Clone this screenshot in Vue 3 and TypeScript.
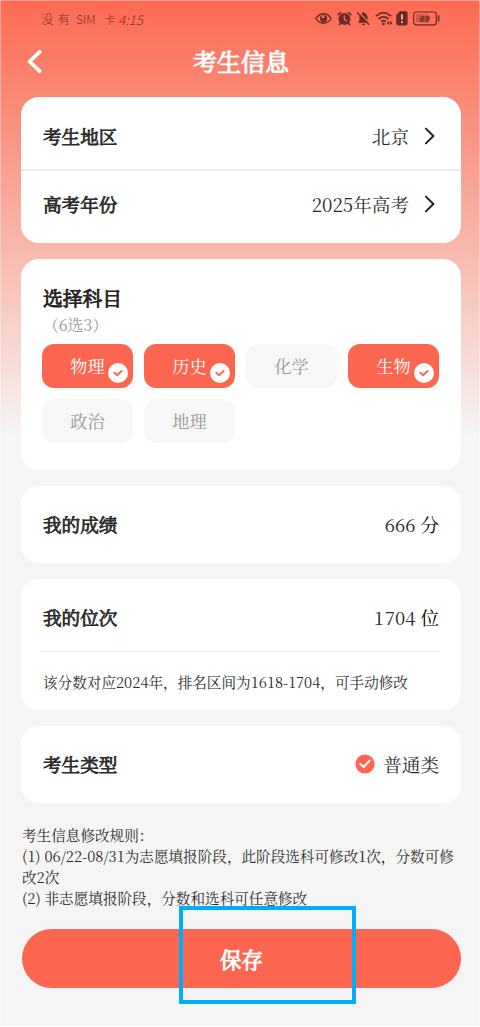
<script setup lang="ts">
import { h, ref } from 'vue'

interface Subject {
  name: string
  picked: boolean
}

const subjects = ref<Subject[]>([
  { name: '物理', picked: true },
  { name: '历史', picked: true },
  { name: '化学', picked: false },
  { name: '生物', picked: true },
  { name: '政治', picked: false },
  { name: '地理', picked: false },
])

const pickers = [
  { label: '考生地区', value: '北京' },
  { label: '高考年份', value: '2025年高考' },
]

const rules = [
  '考生信息修改规则：',
  '(1) 06/22-08/31为志愿填报阶段，此阶段选科可修改1次，分数可修',
  '改2次',
  '(2) 非志愿填报阶段，分数和选科可任意修改',
]

const Figures = (props: { text: string }) =>
  props.text.split(/(1)/).map((part) => (part === '1' ? h('span', { class: 'figure-one' }, part) : part))
Figures.props = ['text']
</script>

<template>
  <div class="page">
    <header class="status">
      <div class="carrier">
        <span class="c1">没有</span><span class="c2">SIM</span><span class="c3">卡</span><span class="c4">4:15</span>
      </div>
      <div class="status-icons">
        <svg class="eye" width="17" height="13" viewBox="0 0 17 13">
          <path d="M.9 6.5C4.8.2 12.2.2 16.1 6.5 12.2 12.8 4.8 12.8.9 6.5Z" fill="none" stroke="currentColor" stroke-width="1.4" />
          <circle cx="8.5" cy="6.6" r="3.6" fill="currentColor" />
          <circle cx="8.1" cy="4.7" r="1.5" fill="#fb705b" />
        </svg>
        <svg class="alarm" width="15" height="15" viewBox="0 0 15 15">
          <circle cx="7.5" cy="8" r="6" fill="currentColor" />
          <path d="M1.2 3.6 3.4 1.6M13.8 3.6l-2.2-2M3.2 12.6l-.8 1.1M11.8 12.6l.8 1.1" stroke="currentColor" stroke-width="1.7" stroke-linecap="round" />
          <path d="M7.3 4.5V8.3L10 10" stroke="#fb705b" stroke-width="1.3" fill="none" />
        </svg>
        <svg class="bell" width="15" height="15" viewBox="0 0 15 15">
          <path d="M7.5 1.2c-.8 0-1.2.5-1.2 1.1C4 3 3.4 5 3.4 7v2.5L1.8 11.8h11.4l-1.6-2.3V7c0-2-.6-4-2.9-4.7 0-.6-.4-1.1-1.2-1.1ZM5.8 12.7h3.4c0 2-3.4 2-3.4 0Z" fill="currentColor" />
          <path d="M2.4 1.1 14.4 13" stroke="#fb705b" stroke-width="1.4" />
          <path d="M1.2 1.6 13.2 13.8" stroke="currentColor" stroke-width="1.4" />
        </svg>
        <svg class="wifi" width="18" height="15" viewBox="0 0 18 15">
          <path d="M1 5.1Q8.5-1.7 16 5.1M3.5 8Q8.5 3.6 13.5 8M6 10.6Q8.5 8.6 11 10.6" fill="none" stroke="currentColor" stroke-width="1.7" />
          <circle cx="8.5" cy="12.9" r="1.4" fill="currentColor" />
          <path d="M14.1 10v4L11.6 12ZM15 10v4l2.5-2Z" fill="currentColor" />
        </svg>
        <svg class="sim" width="12" height="15" viewBox="0 0 12 15">
          <path d="M3.8.3H9.8a1.8 1.8 0 0 1 1.8 1.8V12.6a1.8 1.8 0 0 1-1.8 1.8H2A1.8 1.8 0 0 1 .2 12.6V4Z" fill="currentColor" />
          <path d="M6 3.3V8.6M6 10.2v1.9" stroke="#ffb3a3" stroke-width="1.8" />
        </svg>
        <svg class="battery" width="27" height="15" viewBox="0 0 27 15">
          <rect x=".7" y="1" width="22.6" height="12.8" rx="2.6" fill="none" stroke="currentColor" stroke-width="1.2" />
          <rect x="3" y="3.2" width="12.8" height="8.4" rx="1" fill="currentColor" opacity=".3" />
          <path d="M25.6 4.3V10.5" stroke="currentColor" stroke-width="1.6" />
          <text x="6.6" y="10.6" class="charge">69</text>
        </svg>
      </div>
    </header>

    <nav class="bar">
      <svg class="back" width="16" height="25" viewBox="0 0 16 25">
        <path d="M13.6 2.8 3.6 12.5 13.6 22.2" fill="none" stroke="#fff" stroke-width="3.8" stroke-linecap="round" stroke-linejoin="round" />
      </svg>
      <h1>考生信息</h1>
      <span class="bar-end"></span>
    </nav>

    <main class="content">
      <section class="card pickers">
        <div v-for="p in pickers" :key="p.label" class="row picker">
          <span class="label">{{ p.label }}</span>
          <span class="value">{{ p.value }}</span>
          <svg class="chevron" width="11" height="18" viewBox="0 0 11 18">
            <path d="M1.9 1.6 9.4 9 1.9 16.4" fill="none" stroke="#222" stroke-width="2" stroke-linecap="round" stroke-linejoin="round" />
          </svg>
        </div>
      </section>

      <section class="card subjects">
        <h2>选择科目</h2>
        <p class="hint">（6选3）</p>
        <div class="chips">
          <div v-for="s in subjects" :key="s.name" class="chip" :class="{ picked: s.picked }">
            {{ s.name }}
            <svg v-if="s.picked" class="tick" width="20" height="20" viewBox="0 0 20 20">
              <circle cx="10" cy="10" r="10" fill="#fff" />
              <path d="M6.3 9.7 9.2 12.3 13.6 8" fill="none" stroke="#fc6650" stroke-width="1.9" stroke-linecap="round" stroke-linejoin="round" />
            </svg>
          </div>
        </div>
      </section>

      <section class="card row score">
        <span class="label">我的成绩</span>
        <span class="amount">666</span>
        <span class="unit">分</span>
      </section>

      <section class="card rank">
        <div class="row rank-row">
          <span class="label">我的位次</span>
          <span class="amount"><Figures text="1704" /></span>
          <span class="unit">位</span>
        </div>
        <p class="note"><Figures text="该分数对应2024年，排名区间为1618-1704，可手动修改" /></p>
      </section>

      <section class="card row kind">
        <span class="label">考生类型</span>
        <svg class="kind-tick" width="20" height="20" viewBox="0 0 20 20">
          <circle cx="10" cy="10" r="9.6" fill="#fc6650" />
          <path d="M5.4 10 8.6 13 14.6 6.6" fill="none" stroke="#fff" stroke-width="2" stroke-linecap="round" stroke-linejoin="round" />
        </svg>
        <span class="kind-name">普通类</span>
      </section>

      <div class="rules">
        <p v-for="r in rules" :key="r"><Figures :text="r" /></p>
      </div>

      <div class="save-area">
        <button type="button" class="save">保存</button>
        <div class="highlight"></div>
      </div>
    </main>
  </div>
</template>

<style>
body {
  margin: 0;
}

.figure-one {
  padding: 0 0.04em;
}
</style>

<style scoped>
.page {
  box-sizing: border-box;
  width: 480px;
  height: 1027px;
  overflow: hidden;
  border-top: 1px solid #ff9d8d;
  border-left: 1px solid rgba(255, 255, 255, 0.35);
  border-right: 1px solid rgba(255, 255, 255, 0.35);
  border-bottom: 1px solid #fff;
  background: linear-gradient(#fe6a53 0, #fa8976 100px, #f9b7ab 245px, #f8cbc3 310px, #f5f5f5 437px) border-box #f5f5f5;
  color: #2b2b2b;
  font-family: "Noto Serif CJK SC", "Liberation Serif", "Noto Sans CJK SC", serif;
  font-kerning: none;
}

h1,
h2,
p {
  margin: 0;
}

.status {
  display: flex;
  justify-content: space-between;
  height: 35px;
  padding: 0 39px 0 40px;
  color: #6b2a25;
}

.carrier {
  display: flex;
  align-items: center;
  height: 36px;
  color: #7e322a;
  font-family: "Noto Sans CJK SC", sans-serif;
  font-size: 12.5px;
  font-weight: 300;
  line-height: 16px;
  white-space: nowrap;
}

.c1 {
  width: 35px;
  letter-spacing: 4px;
}

.c2 {
  width: 28px;
  font-size: 12px;
}

.c3 {
  width: 14px;
  font-size: 11.5px;
}

.c4 {
  font-size: 13.5px;
  font-style: italic;
}

.status-icons {
  display: flex;
  align-items: center;
  height: 34px;
}

.alarm {
  margin-left: 5px;
}

.bell {
  margin-left: 4px;
}

.wifi {
  margin-left: 4px;
}

.sim {
  margin-left: 3px;
}

.battery {
  margin-left: 5px;
}

.charge {
  font: italic bold 9px "Liberation Sans", sans-serif;
  fill: currentColor;
}

.bar {
  display: flex;
  align-items: center;
  justify-content: space-between;
  height: 50px;
  padding: 0 25px 2px;
}

.bar-end {
  width: 14px;
}

h1 {
  color: #fff;
  font-size: 24px;
  font-weight: 400;
  line-height: 36px;
  -webkit-text-stroke: 1.1px #fff;
}

.content {
  display: flex;
  flex-direction: column;
  gap: 16px;
  padding: 9px 18px 0 20px;
}

.card {
  box-sizing: border-box;
  border-radius: 18px;
  background: #fff;
}

.row {
  display: flex;
  align-items: center;
  padding: 0 22px;
  line-height: 28px;
}

.label {
  margin-right: auto;
  font-size: 18.6px;
  font-weight: 400;
  -webkit-text-stroke: 0.8px #2b2b2b;
}

.value,
.kind-name,
.unit {
  font-size: 18.6px;
}

.pickers {
  height: 146px;
}

.picker {
  box-sizing: border-box;
  height: 72px;
  padding-top: 5px;
}

.picker + .picker {
  height: 69px;
  padding-top: 0;
  padding-bottom: 1px;
  border-top: 2px solid #e9e9e9;
}

.chevron {
  margin: 0 4px 0 15px;
}

.subjects {
  height: 211px;
  padding: 25px 21px 0;
}

h2 {
  padding-left: 1px;
  font-size: 19.8px;
  font-weight: 400;
  line-height: 28px;
  -webkit-text-stroke: 0.9px #222;
}

.hint {
  padding-left: 1px;
  color: #969696;
  font-size: 15.8px;
  line-height: 25px;
}

.chips {
  display: grid;
  grid-template-columns: repeat(4, 91px);
  gap: 11px;
  padding-top: 7px;
}

.chip {
  position: relative;
  height: 44px;
  border-radius: 12px;
  background: #f7f7f7;
  color: #969696;
  font-size: 17.2px;
  line-height: 43px;
  text-align: center;
}

.picked {
  background: #fc6650;
  color: #fff;
}

.tick {
  position: absolute;
  right: 5px;
  bottom: 5px;
}

.score,
.kind {
  height: 77px;
  padding-bottom: 2px;
}

.amount {
  font-size: 18.6px;
}

.unit {
  margin-left: 5px;
  color: #000;
}

.rank {
  height: 131px;
}

.rank-row {
  height: 73px;
  box-sizing: border-box;
  margin: 0 21px;
  padding: 3px 1px 0;
  border-bottom: 1px solid #e9e9e9;
}

.note {
  padding: 19px 22px 0;
  font-size: 14.6px;
  line-height: 22px;
  white-space: nowrap;
}

.kind-name {
  margin-left: 8px;
}

.rules {
  margin-top: 5px;
  padding-left: 1px;
  font-size: 14.6px;
  line-height: 21px;
  white-space: nowrap;
}

.save-area {
  position: relative;
  margin-top: 5px;
}

.save {
  display: block;
  width: 439px;
  height: 59px;
  margin-left: 1px;
  padding: 0 0 1px;
  border: 0;
  border-radius: 30px;
  background: #fc6650;
  color: #fff;
  font-family: inherit;
  font-size: 21.5px;
  font-weight: 400;
  -webkit-text-stroke: 1px #fff;
}

.highlight {
  position: absolute;
  top: -23px;
  left: 158px;
  box-sizing: border-box;
  width: 177px;
  height: 98px;
  border: 4px solid #03acf7;
}
</style>
